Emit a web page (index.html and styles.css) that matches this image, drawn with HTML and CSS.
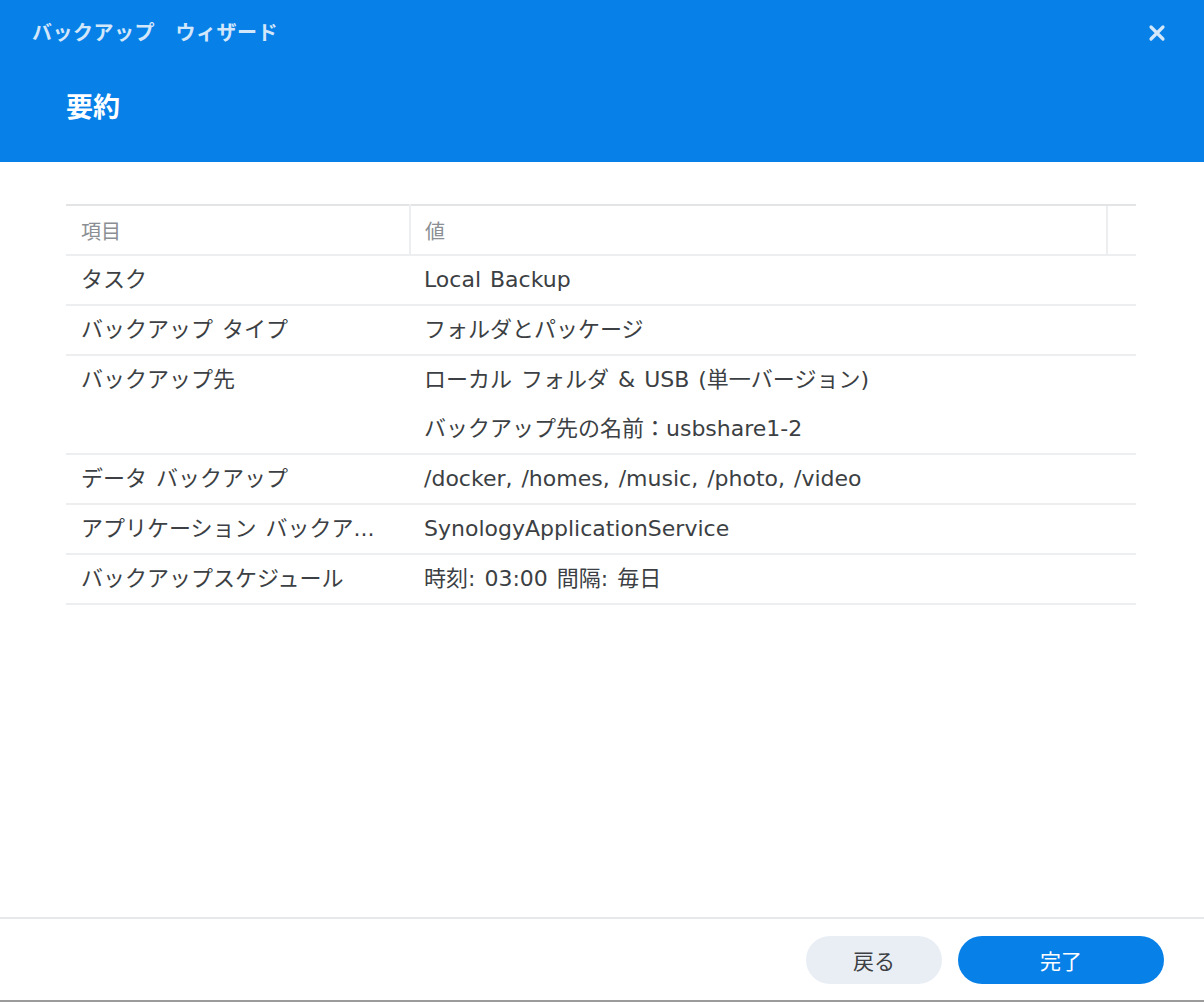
FILE: index.html
```html
<!DOCTYPE html>
<html lang="ja">
<head>
  <meta charset="UTF-8">
  <title>バックアップ ウィザード</title>
  <link rel="stylesheet" href="styles.css">
</head>
<body>
  <div class="wizard">
    <!-- En-tête bleu -->
    <div class="wizard-head">
      <div class="head-top">
        <span class="wizard-title">バックアップ　ウィザード</span>
        <span class="close-btn">
          <svg width="18" height="18" viewBox="0 0 18 18">
            <path d="M3 3 L15 15 M15 3 L3 15" stroke="#d3e7fb" stroke-width="3.2" stroke-linecap="round"/>
          </svg>
        </span>
      </div>
      <h1 class="step-title">要約</h1>
    </div>

    <!-- Tableau récapitulatif -->
    <div class="wizard-body">
      <table class="summary">
        <thead>
          <tr>
            <th class="col-key">項目</th>
            <th class="col-val">値</th>
            <th class="col-gutter"></th>
          </tr>
        </thead>
        <tbody>
          <tr><td class="col-key">タスク</td><td colspan="2">Local Backup</td></tr>
          <tr><td class="col-key">バックアップ タイプ</td><td colspan="2">フォルダとパッケージ</td></tr>
          <tr>
            <td class="col-key">バックアップ先</td>
            <td colspan="2">
              <div class="line">ローカル フォルダ &amp; USB (単一バージョン)</div>
              <div class="line">バックアップ先の名前：usbshare1-2</div>
            </td>
          </tr>
          <tr><td class="col-key">データ バックアップ</td><td colspan="2">/docker, /homes, /music, /photo, /video</td></tr>
          <tr><td class="col-key">アプリケーション バックア...</td><td colspan="2">SynologyApplicationService</td></tr>
          <tr><td class="col-key">バックアップスケジュール</td><td colspan="2">時刻: 03:00 間隔: 毎日</td></tr>
        </tbody>
      </table>
    </div>

    <!-- Boutons -->
    <div class="wizard-foot">
      <button class="btn btn-back">戻る</button>
      <button class="btn btn-done">完了</button>
    </div>
  </div>
</body>
</html>
```

FILE: styles.css
```css
/* Style global */
html, body {
  margin: 0;
  padding: 0;
  height: 100%;
  background: #fff;
}

body {
  font-family: "DejaVu Sans", Verdana, "Noto Sans CJK JP", sans-serif;
  color: #3c3f43;
}

.wizard {
  display: flex;
  flex-direction: column;
  height: 100%;
  box-sizing: border-box;
  border-bottom: 2px solid #9b9b9b;
}

/* En-tête */
.wizard-head {
  background: #0780e8;
  height: 162px;
  box-sizing: border-box;
  padding: 18px 38px 0 32px;
}

.head-top {
  display: flex;
  justify-content: space-between;
  align-items: center;
  height: 26px;
}

.wizard-title {
  font-family: "Noto Sans CJK JP", sans-serif;
  font-weight: 700;
  font-size: 20px;
  color: #d3e7fb;
  letter-spacing: 0.5px;
}

.close-btn {
  display: flex;
  margin-top: 4px;
}

.step-title {
  margin: 45px 0 0 34px;
  font-family: "Noto Sans CJK JP", sans-serif;
  font-weight: 700;
  font-size: 27px;
  line-height: 34px;
  color: #fff;
}

/* Tableau */
.wizard-body {
  flex: 1;
  padding: 42px 68px 0 66px;
}

.summary {
  width: 100%;
  border-collapse: collapse;
  font-size: 22px;
  word-spacing: 2px;
  table-layout: fixed;
}

.summary th {
  text-align: left;
  font-weight: 400;
  color: #8b8e92;
  height: 48px;
  border-top: 2px solid #e2e4e6;
  border-bottom: 2px solid #eceef0;
  padding: 0 14px;
  font-family: "Noto Sans CJK JP", sans-serif;
  font-size: 20px;
}

.summary th.col-key {
  width: 344px;
  box-sizing: border-box;
  padding-left: 15px;
  border-right: 2px solid #eceef0;
}

.summary th.col-gutter {
  width: 28px;
  padding: 0;
  border-left: 2px solid #eceef0;
}

.summary td {
  height: 48px;
  padding: 0 14px;
  border-bottom: 2px solid #eceef0;
  vertical-align: top;
  line-height: 48px;
  white-space: nowrap;
}

.summary td.col-key {
  padding-left: 15px;
}

.summary .line {
  height: 48.5px;
}

/* Pied de page */
.wizard-foot {
  display: flex;
  justify-content: flex-end;
  gap: 16px;
  border-top: 2px solid #e6e8ea;
  padding: 17px 40px 16px 0;
}

.btn {
  height: 48px;
  border: none;
  border-radius: 24px;
  font-family: "Noto Sans CJK JP", sans-serif;
  font-size: 21px;
  cursor: pointer;
}

.btn-back {
  width: 136px;
  background: #e9eef5;
  color: #3c3f43;
}

.btn-done {
  width: 206px;
  background: #0780e8;
  color: #fff;
}
```
